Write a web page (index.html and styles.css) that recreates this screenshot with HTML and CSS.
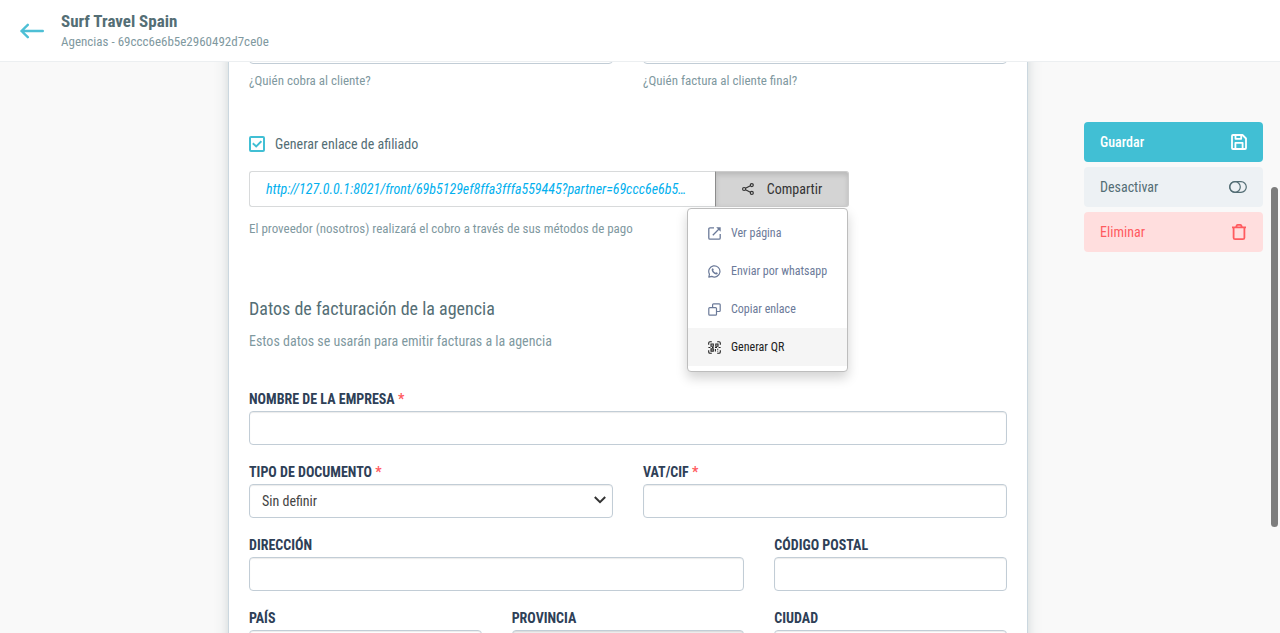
FILE: index.html
```html
<!DOCTYPE html>
<html lang="es">
<head>
<meta charset="utf-8">
<meta name="viewport" content="width=device-width, initial-scale=1">
<title>Surf Travel Spain</title>
<link rel="stylesheet" href="styles.css">
</head>
<body>
<div class="app">
  <header class="topbar">
    <a class="back" href="#" aria-label="Volver">
      <svg width="24" height="16" viewBox="0 0 24 16" fill="none" stroke="currentColor" stroke-width="2.4" stroke-linecap="round" stroke-linejoin="round"><path d="M22.8 8H1.5M7.8 1.8L1.5 8L7.8 14.2"/></svg>
    </a>
    <div>
      <h1 class="title">Surf Travel Spain</h1>
      <p class="subtitle">Agencias - 69ccc6e6b5e2960492d7ce0e</p>
    </div>
  </header>

  <main class="page">
    <form class="card">
      <div class="row halves">
        <div>
          <input class="control" type="text" aria-label="¿Quién cobra al cliente?">
          <p class="hint">¿Quién cobra al cliente?</p>
        </div>
        <div>
          <input class="control" type="text" aria-label="¿Quién factura al cliente final?">
          <p class="hint">¿Quién factura al cliente final?</p>
        </div>
      </div>

      <section class="affiliate">
        <label class="check"><input type="checkbox" checked><span>Generar enlace de afiliado</span></label>
        <div class="share">
          <a class="share-link" href="#">http://127.0.0.1:8021/front/69b5129ef8ffa3fffa559445?partner=69ccc6e6b5…</a>
          <button class="share-button" type="button">
            <svg width="12" height="12" viewBox="0 0 12 12" fill="none" stroke="currentColor" stroke-width="1.2"><circle cx="2.1" cy="6" r="1.5"/><circle cx="9.8" cy="2.1" r="1.5"/><circle cx="9.8" cy="9.9" r="1.5"/><path d="M3.5 5.3L8.4 2.8M3.5 6.7L8.4 9.2"/></svg>
            Compartir
          </button>
          <div class="menu">
            <button class="menu-item" type="button">
              <svg width="13" height="13" viewBox="0 0 13 13" fill="none" stroke="currentColor" stroke-width="1.3"><path d="M6 .9H2Q.8.9.8 2.1V11Q.8 12.2 2 12.2H11Q12.2 12.2 12.2 11V7M4.8 8.2L11 2"/><path d="M8.2.3H12.7V4.8Z" fill="currentColor" stroke="none"/></svg>
              Ver página
            </button>
            <button class="menu-item" type="button">
              <svg width="13" height="13" viewBox="0 0 13 13" fill="none" stroke="currentColor" stroke-width="1.2" stroke-linejoin="round"><path d="M.8 12.2L1.5 9.2A5.6 5.6 0 1 1 3.8 11.4Z"/><path d="M4.2 3.4L5 3.2L5.8 4.8L5.2 5.6Q5.9 7.1 7.4 7.8L8.2 7.2L9.8 8L9.5 9Q8.3 10 6.2 8.7Q3.8 7.1 3.6 5Q3.6 4 4.2 3.4Z" fill="currentColor" stroke="none"/></svg>
              Enviar por whatsapp
            </button>
            <button class="menu-item" type="button">
              <svg width="13" height="13" viewBox="0 0 13 13" fill="none" stroke="currentColor" stroke-width="1.2"><rect x=".8" y="4.6" width="7.7" height="7.6" rx="1"/><path d="M4.6 4.5V1.7Q4.6.8 5.5.8H11.3Q12.2.8 12.2 1.7V7.6Q12.2 8.5 11.3 8.5H8.6"/></svg>
              Copiar enlace
            </button>
            <button class="menu-item active" type="button">
              <svg width="13" height="13" viewBox="0 0 13 13" fill="none" stroke="currentColor" stroke-width="1.1"><path d="M.7 3.8V2Q.7.7 2 .7H3.8M9.2.7H11Q12.3.7 12.3 2V3.8M12.3 9.2V11Q12.3 12.3 11 12.3H9.2M3.8 12.3H2Q.7 12.3.7 11V9.2"/><path d="M3 3H5.3V5.2H3ZM7.8 3H10V5.2H7.8ZM3 7.9H5.3V10.1H3ZM.4 6.5H2.4M4 6.5H5.6M7 6.5H9M10.6 6.5H12.6M7.4 8V10.6M9.7 7.8V8.8M9.7 9.8V10.6"/></svg>
              Generar QR
            </button>
          </div>
        </div>
        <p class="hint share-hint">El proveedor (nosotros) realizará el cobro a través de sus métodos de pago</p>
      </section>

      <section>
        <h2 class="section-title">Datos de facturación de la agencia</h2>
        <p class="section-text">Estos datos se usarán para emitir facturas a la agencia</p>
        <div class="fields">
          <div class="field">
            <label for="company">NOMBRE DE LA EMPRESA <span class="required">*</span></label>
            <input class="control" id="company" type="text">
          </div>
          <div class="row halves">
            <div class="field">
              <label for="doctype">TIPO DE DOCUMENTO <span class="required">*</span></label>
              <div class="select">
                <select class="control" id="doctype"><option>Sin definir</option></select>
                <svg class="chevron" width="12" height="8" viewBox="0 0 12 8" fill="none" stroke="currentColor" stroke-width="2"><path d="M.8 1L6 6.2L11.2 1"/></svg>
              </div>
            </div>
            <div class="field">
              <label for="vat">VAT/CIF <span class="required">*</span></label>
              <input class="control" id="vat" type="text">
            </div>
          </div>
          <div class="row thirds">
            <div class="field wide">
              <label for="address">DIRECCIÓN</label>
              <input class="control" id="address" type="text">
            </div>
            <div class="field">
              <label for="zip">CÓDIGO POSTAL</label>
              <input class="control" id="zip" type="text">
            </div>
          </div>
          <div class="row thirds">
            <div class="field">
              <label for="country">PAÍS</label>
              <input class="control" id="country" type="text">
            </div>
            <div class="field">
              <label for="province">PROVINCIA</label>
              <input class="control" id="province" type="text" disabled>
            </div>
            <div class="field">
              <label for="city">CIUDAD</label>
              <input class="control" id="city" type="text">
            </div>
          </div>
        </div>
      </section>
    </form>

    <aside class="actions">
      <button class="action save" type="button">Guardar
        <svg width="16" height="16" viewBox="0 0 16 16" fill="none" stroke="currentColor" stroke-width="1.8" stroke-linejoin="round"><path d="M1 2Q1 1 2 1H11.5L15 4.5V14Q15 15 14 15H2Q1 15 1 14ZM4.4 15V8.8H11.6V15M4.5 1V4.8H10.2V1"/></svg>
      </button>
      <button class="action toggle" type="button">Desactivar
        <svg width="18" height="12" viewBox="0 0 18 12" fill="none" stroke="currentColor" stroke-width="1.2"><rect x=".7" y=".7" width="16.6" height="10.6" rx="5.3"/><circle cx="6" cy="6" r="5.3"/></svg>
      </button>
      <button class="action delete" type="button">Eliminar
        <svg width="16" height="16" viewBox="0 0 16 16" fill="none" stroke="currentColor" stroke-width="1.8" stroke-linejoin="round"><path d="M1 3.4H15M2.6 3.4V13.7Q2.6 15.1 4.1 15.1H11.9Q13.4 15.1 13.4 13.7V3.4M5 3.4L5.7 1.6Q6 .9 6.8.9H9.2Q10 .9 10.3 1.6L11 3.4"/></svg>
      </button>
    </aside>
  </main>
  <div class="scroll-thumb"></div>
</div>
</body>
</html>
```
FILE: styles.css
```css
* { box-sizing: border-box; }

body {
  margin: 0;
  background: #f9f9f9;
  color: #546e75;
  font: 14px/18px "Roboto Condensed", "Liberation Sans Narrow", Roboto, sans-serif;
}

h1, h2, p { margin: 0; }
button, input, select { font: inherit; }
button { cursor: pointer; }
svg { flex: none; }

.app {
  position: relative;
  height: 100vh;
  overflow: hidden;
}

.topbar {
  position: relative;
  z-index: 2;
  display: flex;
  align-items: center;
  gap: 17px;
  height: 62px;
  padding: 0 20px;
  background: #fff;
  border-bottom: 1px solid #eceff1;
}

.back {
  display: flex;
  color: #4dbfd5;
}

.title {
  margin-bottom: 1px;
  font-size: 17px;
  line-height: 21px;
  font-weight: 700;
}

.subtitle {
  color: #7f999f;
  font-size: 13px;
}

/* The form starts scrolled a little under the top bar. */
.page {
  display: grid;
  grid-template-columns: 228fr minmax(0, 800px) 235fr;
  margin-top: -32px;
  padding-right: 17px;
}

.card {
  grid-column: 2;
  padding: 0 20px 40px;
  background: #fff;
  border: 1px solid #cbd7df;
  border-top: 0;
  box-shadow: 0 0 12px rgba(84, 110, 117, 0.25);
}

.row {
  display: grid;
  gap: 30px;
}

.halves { grid-template-columns: 1fr 1fr; }
.thirds { grid-template-columns: repeat(3, 1fr); }
.wide { grid-column: span 2; }

.control {
  display: block;
  width: 100%;
  height: 34px;
  padding: 0 12px;
  color: #444;
  background: #fff;
  border: 1px solid #c2cdd6;
  border-radius: 4px;
  box-shadow: inset 0 1px 1px rgba(0, 0, 0, 0.08);
}

.control:disabled { background: #eee; }

.hint {
  margin-top: 8px;
  color: #7f999f;
  font-size: 13px;
}

.affiliate { margin-top: 45px; }

.check {
  display: flex;
  align-items: center;
  gap: 10px;
}

.check input {
  appearance: none;
  width: 16px;
  height: 16px;
  margin: 0;
  border: 2px solid #41bfd4;
  border-radius: 2px;
  background: center / 10px 8px no-repeat url("data:image/svg+xml,%3Csvg xmlns='http://www.w3.org/2000/svg' viewBox='0 0 10 8' fill='none' stroke='%2341bfd4' stroke-width='1.9'%3E%3Cpath d='M.8 3.2L4.2 6.4L9.4 1.2'/%3E%3C/svg%3E");
}

.share {
  position: relative;
  display: flex;
  width: 600px;
  max-width: 100%;
  height: 36px;
  margin-top: 18px;
}

.share-link {
  flex: 1;
  min-width: 0;
  padding: 0 12px 0 16px;
  overflow: hidden;
  color: #03b0ee;
  font-style: oblique 20deg;
  line-height: 34px;
  text-decoration: none;
  text-overflow: ellipsis;
  white-space: nowrap;
  border: 1px solid #d8dadb;
  border-right: 0;
  border-radius: 3px 0 0 3px;
}

.share-button {
  display: flex;
  align-items: center;
  justify-content: center;
  gap: 13px;
  width: 134px;
  padding: 0;
  color: #333;
  background: #d4d4d4;
  border: 1px solid #ccc;
  border-left-color: #8c8c8c;
  border-radius: 0 3px 3px 0;
  box-shadow: inset 0 3px 5px rgba(0, 0, 0, 0.125);
}

.menu {
  position: absolute;
  top: 37px;
  right: 1px;
  width: 161px;
  padding: 5px 0;
  background: #fff;
  border: 1px solid #bdbdbd;
  border-radius: 4px;
  box-shadow: 0 6px 12px rgba(0, 0, 0, 0.175);
}

.menu-item {
  display: flex;
  align-items: center;
  gap: 10px;
  width: 100%;
  height: 38px;
  padding: 0 10px 0 20px;
  color: #6b7a99;
  font-size: 12px;
  white-space: nowrap;
  background: none;
  border: 0;
}

.menu-item.active {
  color: #222;
  background: #f5f5f5;
}

.share-hint { margin-top: 13px; }

.section-title {
  margin-top: 59px;
  font-size: 18px;
  line-height: 24px;
  font-weight: 400;
}

.section-text {
  margin-top: 11px;
  color: #7f999f;
}

.fields {
  display: grid;
  gap: 18px;
  margin-top: 40px;
}

.field label {
  display: block;
  margin-bottom: 3px;
  color: #2e4057;
  font-weight: 700;
}

.field .required { color: #ff5b5f; }

.select { position: relative; }
.select select { appearance: none; }

.chevron {
  position: absolute;
  top: 12px;
  right: 7px;
  color: #333;
  pointer-events: none;
}

.actions {
  display: grid;
  align-content: start;
  justify-self: end;
  gap: 5px;
  width: 179px;
  padding-top: 92px;
}

.action {
  display: flex;
  align-items: center;
  justify-content: space-between;
  height: 40px;
  padding: 0 16px;
  border: 0;
  border-radius: 4px;
}

.save { color: #fff; background: #41bfd4; font-weight: 500; }
.toggle { color: #546e75; background: #edf1f4; }
.delete { color: #ff5b5f; background: #ffdede; }

.scroll-thumb {
  position: absolute;
  top: 187px;
  right: 2px;
  width: 7px;
  height: 340px;
  background: #7d7d7d;
  border-radius: 4px;
}
```
